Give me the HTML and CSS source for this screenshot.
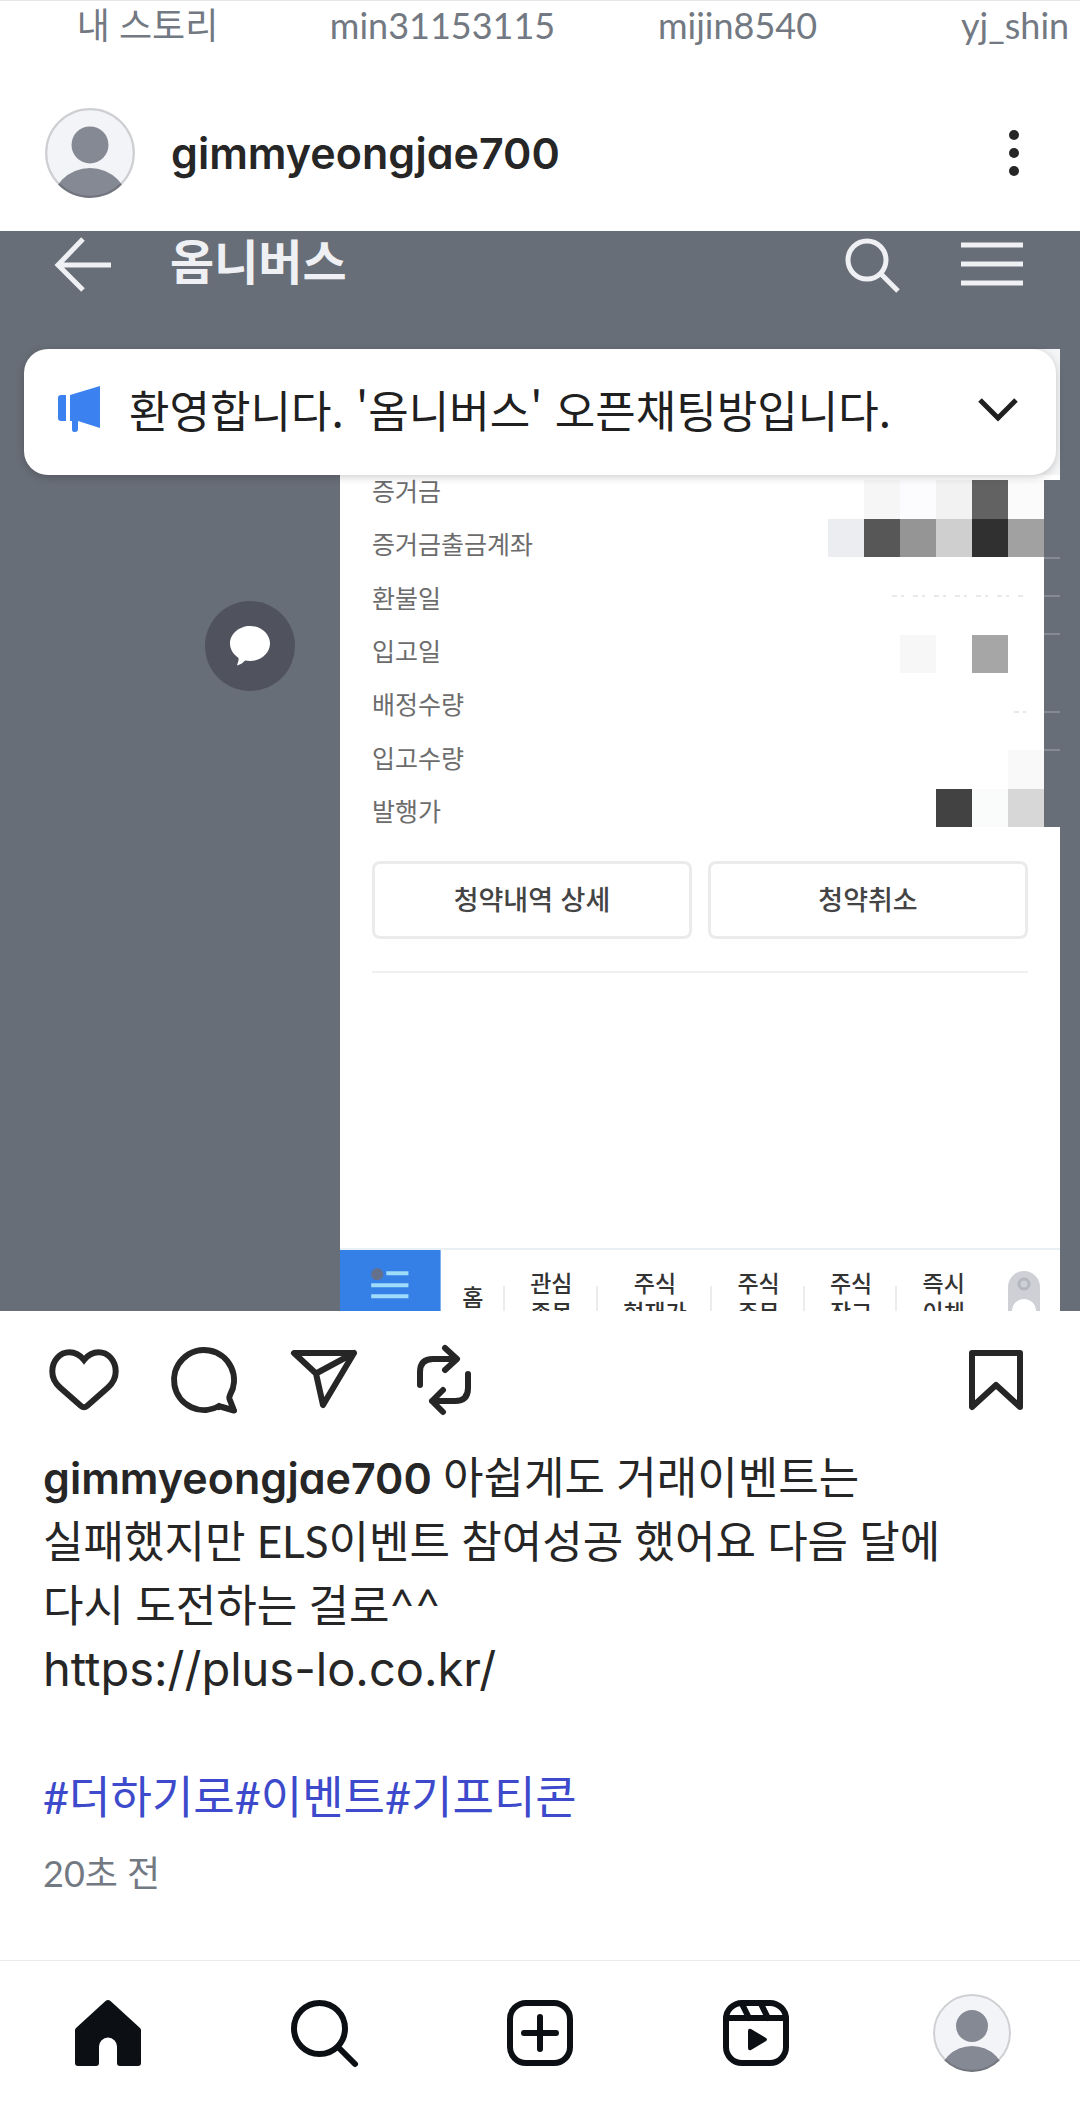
FILE: index.html
```html
<!DOCTYPE html>
<html lang="ko">
<head>
<meta charset="utf-8">
<meta name="viewport" content="width=device-width, initial-scale=1">
<title>gimmyeongjae700</title>
<link rel="stylesheet" href="styles.css">
</head>
<body>
<ul class="stories">
  <li>내 스토리</li>
  <li>min31153115</li>
  <li>mijin8540</li>
  <li class="story-cut">yj_shin</li>
</ul>

<main>
<article class="post">
  <header class="post-header">
    <svg class="avatar" viewBox="0 0 78 78" aria-hidden="true">
      <defs><clipPath id="face"><circle cx="39" cy="39" r="39"/></clipPath></defs>
      <g clip-path="url(#face)">
        <circle cx="39" cy="39" r="39" fill="#f3f4f7"/>
        <circle cx="39" cy="32" r="16" fill="#858993"/>
        <circle cx="39" cy="86" r="34" fill="#858993"/>
      </g>
      <circle cx="39" cy="39" r="38" fill="none" stroke="#000" stroke-opacity=".15" stroke-width="2"/>
    </svg>
    <a class="username" href="#profile">gimmyeongjae700</a>
    <button class="icon-button more" type="button" aria-label="더 보기">
      <svg class="dots" viewBox="0 0 24 72"><circle cx="12" cy="18" r="5"/><circle cx="12" cy="36" r="5"/><circle cx="12" cy="54" r="5"/></svg>
    </button>
  </header>

  <div class="photo">
    <div class="chat-bar">
      <button class="icon-button" type="button" aria-label="뒤로">
        <svg class="chat-icon" viewBox="0 0 64 64"><path d="M35 8 10 34l25 25M11 34h52"/></svg>
      </button>
      <h2 class="chat-title">옴니버스</h2>
      <button class="icon-button" type="button" aria-label="검색">
        <svg class="chat-icon" viewBox="0 0 64 64"><circle cx="27" cy="29" r="19"/><path d="M41 43l17 17"/></svg>
      </button>
      <button class="icon-button" type="button" aria-label="메뉴">
        <svg class="chat-icon" viewBox="0 0 64 64"><path d="M1 14h62M1 33h62M1 52h62"/></svg>
      </button>
    </div>

    <div class="notice">
      <svg class="megaphone" viewBox="0 0 44 48" aria-hidden="true">
        <path d="M1 13q0-3 3-3h5v26H4q-3 0-3-3z"/><path d="M13 10 43 1v42l-22-7v8q0 3-3 3h-1q-2 0-2-3v-8h-2z"/>
      </svg>
      <p class="notice-text">환영합니다. '옴니버스' 오픈채팅방입니다.</p>
      <button class="icon-button notice-toggle" type="button" aria-label="공지 펼치기">
        <svg class="chevron" viewBox="0 0 42 42"><path d="M3 12l18 18 18-18"/></svg>
      </button>
    </div>

    <div class="chat-body">
      <div class="sender">
        <svg class="bubble" viewBox="0 0 90 90" aria-hidden="true">
          <circle cx="45" cy="45" r="45" fill="#50525e"/>
          <path fill="#fff" d="M45 25c-11 0-20 8-20 17.500 0 6 3.500 11 8.500 14.500.5 2-.5 4-1.500 7.500 4-1 6-3 8-5 1.500.3 3 .5 5 .5 11 0 20-8 20-17.500S56 25 45 25z"/>
        </svg>
      </div>

      <div class="shot">
        <div class="details">
          <ul class="fields">
            <li>증거금</li>
            <li>증거금출금계좌</li>
            <li>환불일</li>
            <li>입고일</li>
            <li>배정수량</li>
            <li>입고수량</li>
            <li>발행가</li>
          </ul>
          <svg class="mosaic" viewBox="0 0 232 347" preserveAspectRatio="none" shape-rendering="crispEdges" aria-hidden="true">
            <path fill="#686e77" d="M216 0h16v347h-16z"/>
            <path fill="#f6f6f6" d="M36 0h36v39H36z"/><path fill="#fcfcff" d="M72 0h36v39H72z"/>
            <path fill="#f2f2f2" d="M108 0h36v39h-36z"/><path fill="#626262" d="M144 0h36v39h-36z"/>
            <path fill="#fbfbfb" d="M180 0h36v39h-36z"/>
            <path fill="#ebedf0" d="M0 39h36v38H0z"/><path fill="#575757" d="M36 39h36v38H36z"/>
            <path fill="#959595" d="M72 39h36v38H72z"/><path fill="#cfcfcf" d="M108 39h36v38h-36z"/>
            <path fill="#303030" d="M144 39h36v38h-36z"/><path fill="#a1a1a1" d="M180 39h36v38h-36z"/>
            <path fill="#f7f7f7" d="M72 155h36v38H72z"/><path fill="#a6a6a6" d="M144 155h36v38h-36z"/>
            <path fill="#f9f9f9" d="M180 270h36v39h-36z"/>
            <path fill="#424242" d="M108 309h36v38h-36z"/><path fill="#fafcfc" d="M144 309h36v38h-36z"/>
            <path fill="#d7d7d7" d="M180 309h36v38h-36z"/>
            <path stroke="#e8e8e8" stroke-width="2" stroke-dasharray="5 4 3 9" d="M64 116h132M186 232h16"/>
            <path stroke="#868b93" stroke-width="2" d="M216 78h16M216 116h16M216 154h16M216 232h16M216 270h16"/>
          </svg>
        </div>
        <div class="choices">
          <button class="choice" type="button">청약내역 상세</button>
          <button class="choice" type="button">청약취소</button>
        </div>
        <div class="tabs">
          <svg class="tab-menu" viewBox="0 0 100 62" preserveAspectRatio="xMidYMin slice" aria-hidden="true">
            <path fill="#3580e6" d="M0 0h100v62H0z"/>
            <path stroke="#9fdcfb" stroke-width="4" d="M46 23h22M31 35h37M31 46h37"/>
            <circle cx="37" cy="24" r="6" fill="#65708c"/>
          </svg>
          <span class="tab tab-home">홈</span>
          <span class="tab">관심<br>종목</span>
          <span class="tab tab-wide">주식<br>현재가</span>
          <span class="tab">주식<br>주문</span>
          <span class="tab">주식<br>잔고</span>
          <span class="tab">즉시<br>이체</span>
          <svg class="tab-switch" viewBox="0 0 70 62" aria-hidden="true">
            <rect x="18" y="21" width="32" height="70" rx="16" fill="#ced0d5"/>
            <circle cx="34" cy="34" r="5" fill="none" stroke="#b4b7bd" stroke-width="3"/>
            <circle cx="34" cy="61" r="12" fill="#fff"/>
          </svg>
        </div>
      </div>
    </div>
  </div>

  <div class="actions">
    <button class="icon-button" type="button" aria-label="좋아요">
      <svg class="icon" viewBox="0 0 72 72"><path stroke-linejoin="miter" d="M36 16C32 11 27 8.300 21.500 8.300 12 8.300 4.300 16.500 4.300 27.500c0 6.500 2.700 11.500 7.700 16L33 62q3 2.500 6 0l21-18.500c5-4.500 7.700-9.500 7.700-16C67.700 16.500 60 8.300 50.500 8.300 45 8.300 40 11 36 16z"/></svg>
    </button>
    <button class="icon-button" type="button" aria-label="댓글">
      <svg class="icon" viewBox="0 0 72 72"><path d="M51 62A30 30 0 1 1 62 51q-1 2-.5 4L66 66.500 54 63q-1.500-.8-3 0"/></svg>
    </button>
    <button class="icon-button" type="button" aria-label="보내기">
      <svg class="icon" viewBox="0 0 72 72"><path d="M6 9h60L35 61l-7-31.500zM66 9 28 29.500"/></svg>
    </button>
    <button class="icon-button" type="button" aria-label="리포스트">
      <svg class="icon" viewBox="0 0 72 72"><path d="M12 41V28q0-13 13-13h23M37 4l12 11-12 11M60 30v14q0 13-13 13H24M35 46 24 57l11 11"/></svg>
    </button>
    <button class="icon-button save" type="button" aria-label="저장">
      <svg class="icon" viewBox="0 0 72 72"><path d="M12 9h48v54L36 41 12 63z"/></svg>
    </button>
  </div>

  <div class="caption">
    <p><a class="username" href="#profile">gimmyeongjae700</a> 아쉽게도 거래이벤트는<br>실패했지만 ELS이벤트 참여성공 했어요 다음 달에<br>다시 도전하는 걸로^^<br><span class="address">https://plus-lo.co.kr/</span></p>
    <p class="tags"><a href="#t1">#더하기로</a><a href="#t2">#이벤트</a><a href="#t3">#기프티콘</a></p>
    <time class="when">20초 전</time>
  </div>
</article>
</main>

<nav class="nav">
  <a href="#home" aria-label="홈"><svg class="icon" viewBox="0 0 72 72"><path class="solid" d="M33.500 4q2.500-2 5 0L68 31q1 1 1 2v33q0 3-3 3H48q-3 0-3-3V49.500a9 9 0 0 0-18 0V66q0 3-3 3H6q-3 0-3-3V33q0-1 1-2z"/></svg></a>
  <a href="#search" aria-label="검색"><svg class="icon" viewBox="0 0 72 72"><circle cx="31.500" cy="31.500" r="25.500"/><path d="M51 51l16 16"/></svg></a>
  <a href="#create" aria-label="만들기"><svg class="icon" viewBox="0 0 72 72"><rect x="6" y="6" width="60" height="60" rx="16"/><path d="M36 20v32M20 36h32"/></svg></a>
  <a href="#reels" aria-label="릴스"><svg class="icon" viewBox="0 0 72 72"><rect x="6" y="6" width="60" height="60" rx="16"/><path d="M6 21h60M22 7l7 14M41 7l7 14"/><path class="solid" d="M28 34q0-3 3-2l15 9q2 1.500 0 3l-15 9q-3 1-3-2z"/></svg></a>
  <a href="#me" aria-label="프로필"><svg class="me" viewBox="0 0 78 78">
    <g clip-path="url(#face)">
      <circle cx="39" cy="39" r="39" fill="#f3f4f7"/>
      <circle cx="39" cy="32" r="16" fill="#858993"/>
      <circle cx="39" cy="86" r="34" fill="#858993"/>
    </g>
    <circle cx="39" cy="39" r="38" fill="none" stroke="#000" stroke-opacity=".15" stroke-width="2"/>
  </svg></a>
</nav>
</body>
</html>
```
FILE: styles.css
```css
* { box-sizing: border-box; }

body {
  margin: 0;
  background: #fff;
  color: #262626;
  font-family: Lato, "Noto Sans CJK KR", sans-serif;
  font-size: 44px;
  line-height: 64px;
}

h2, p, ul { margin: 0; padding: 0; }
ul { list-style: none; }
a { color: inherit; text-decoration: none; }
svg { display: block; flex: none; }

.icon-button {
  flex: none;
  padding: 0;
  border: 0;
  background: none;
  color: inherit;
}

.icon {
  width: 72px;
  height: 72px;
  fill: none;
  stroke: currentColor;
  stroke-width: 6;
  stroke-linecap: round;
  stroke-linejoin: round;
}
.icon .solid { fill: currentColor; stroke: none; }

/* Stories */
.stories {
  display: flex;
  overflow: hidden;
  height: 75px;
  border-top: 1px solid #e6e6e6;
  color: #737982;
  font-size: 36px;
  line-height: 48px;
}
.stories li { flex: none; width: 295px; text-align: center; }
.stories .story-cut { padding-left: 76px; text-align: left; }

/* Post header */
.post-header {
  display: flex;
  align-items: center;
  height: 156px;
  padding: 0 54px 0 45px;
}
.avatar { width: 90px; height: 90px; margin-right: 36px; }
.username,
.address {
  font-family: Inter, sans-serif;
  font-feature-settings: "cv11";
  line-height: 48px;
}
.username { font-size: 43px; font-weight: 600; }
.address { font-size: 47px; }
.more { margin-left: auto; }
.dots { width: 24px; height: 72px; fill: #262626; }

/* Shared photo */
.photo {
  display: flex;
  flex-direction: column;
  overflow: hidden;
  aspect-ratio: 1;
  background: #686e77;
  font-family: "Noto Sans CJK KR", sans-serif;
}

.chat-bar {
  display: flex;
  align-items: flex-start;
  flex: none;
  height: 118px;
  padding: 0 56px 0 48px;
  color: #eef0f3;
}
.chat-icon {
  width: 64px;
  height: 64px;
  fill: none;
  stroke: currentColor;
  stroke-width: 5;
}
.chat-title {
  flex: 1;
  padding-left: 58px;
  font-size: 48px;
  font-weight: 700;
  line-height: 56px;
}
.chat-bar .icon-button + .icon-button { margin-left: 56px; }

.notice {
  position: relative;
  z-index: 1;
  display: flex;
  align-items: center;
  flex: none;
  height: 126px;
  margin: 0 24px;
  padding: 0 37px 6px 33px;
  border-radius: 24px;
  background: #fff;
  box-shadow: 0 2px 8px rgba(0, 0, 0, .2);
  color: #202020;
}
.megaphone { width: 44px; height: 48px; fill: #3b82f0; }
.notice-text { flex: 1; padding-left: 28px; white-space: nowrap; }
.chevron { width: 42px; height: 42px; fill: none; stroke: #202020; stroke-width: 5; }

.chat-body {
  display: grid;
  grid-template-columns: minmax(0, 340fr) minmax(0, 720fr);
  flex: 1;
  min-height: 0;
  padding-right: 20px;
}
.sender {
  display: flex;
  justify-content: flex-end;
  padding: 126px 45px 0 0;
}
.bubble { width: 90px; height: 90px; }

.shot {
  position: relative;
  display: flex;
  flex-direction: column;
  background: #fff;
}
/* Corner of the shot that shows from behind the notice */
.shot::before {
  content: "";
  position: absolute;
  right: 0;
  bottom: 100%;
  width: 48px;
  height: 126px;
  background: #f4f5f6;
}

.details {
  display: flex;
  justify-content: space-between;
  height: 352px;
  padding: 5px 0 0 32px;
}
.fields {
  display: flex;
  flex-direction: column;
  margin-top: -17px;
  height: 374px;
  color: #6c6c6c;
  font-size: 25px;
  line-height: 32px;
}
.fields li { display: flex; flex: 1; align-items: center; }
.mosaic { width: 232px; height: 347px; }

.choices {
  display: flex;
  gap: 16px;
  margin: 0 32px;
  padding: 34px 0 32px;
  border-bottom: 2px solid #f0f0f0;
}
.choice {
  flex: 1;
  height: 78px;
  padding: 0 0 2px;
  border: 3px solid #ebebeb;
  border-radius: 8px;
  background: #fff;
  color: #444;
  font: 500 27px/32px "Noto Sans CJK KR", sans-serif;
}

.tabs {
  display: flex;
  flex: none;
  height: 63px;
  margin-top: auto;
  border-top: 2px solid #e9f0f4;
  overflow: hidden;
  color: #333;
  font-size: 23px;
  font-weight: 500;
  line-height: 29px;
  text-align: center;
  white-space: nowrap;
}
.tab-menu { flex: 100; min-width: 0; height: 62px; }
.tab {
  flex: 92;
  padding-top: 18px;
  background: linear-gradient(#ececec, #ececec) right 36px / 2px 100% no-repeat;
}
.tab-home { flex: 64; padding-top: 32px; }
.tab-wide { flex: 114; }
.tab:nth-last-child(2) { background: none; }
.tab-switch { width: 70px; height: 62px; }

/* Actions and caption */
.actions { display: flex; gap: 48px; padding: 33px 48px 29px; }
.save { margin-left: auto; }

.caption { padding: 0 43px 63px; }
.tags { padding-top: 64px; color: #3c4acb; font-size: 45px; }
.when {
  display: block;
  padding-top: 20px;
  color: #737982;
  font-size: 36px;
  line-height: 48px;
}

/* Bottom navigation */
.nav {
  display: flex;
  align-items: center;
  height: 145px;
  border-top: 1px solid #ebebeb;
  color: #0c1014;
}
.nav a { display: flex; justify-content: center; flex: 1; }
.me { width: 78px; height: 78px; }
```
